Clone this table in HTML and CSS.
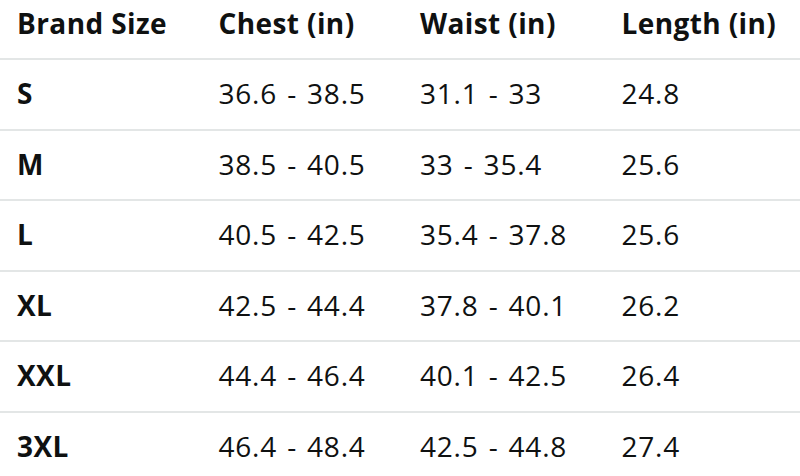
FILE: index.html
```html
<!DOCTYPE html>
<html lang="en">
<head>
<meta charset="utf-8">
<title>Size Chart</title>
<link rel="stylesheet" href="styles.css">
</head>
<body>
<table class="size-table">
  <thead>
    <tr>
      <th>Brand Size</th>
      <th>Chest (in)</th>
      <th>Waist (in)</th>
      <th>Length (in)</th>
    </tr>
  </thead>
  <tbody>
    <tr><th>S</th><td>36.6 - 38.5</td><td>31.1 - 33</td><td>24.8</td></tr>
    <tr><th>M</th><td>38.5 - 40.5</td><td>33 - 35.4</td><td>25.6</td></tr>
    <tr><th>L</th><td>40.5 - 42.5</td><td>35.4 - 37.8</td><td>25.6</td></tr>
    <tr><th>XL</th><td>42.5 - 44.4</td><td>37.8 - 40.1</td><td>26.2</td></tr>
    <tr><th>XXL</th><td>44.4 - 46.4</td><td>40.1 - 42.5</td><td>26.4</td></tr>
    <tr><th>3XL</th><td>46.4 - 48.4</td><td>42.5 - 44.8</td><td>27.4</td></tr>
  </tbody>
</table>
</body>
</html>
```
FILE: styles.css
```css
html, body {
  margin: 0;
  padding: 0;
  background: #ffffff;
  overflow: hidden;
}

body {
  width: 800px;
  height: 476px;
  font-family: "Open Sans", "Noto Sans", sans-serif;
  color: #0f1111;
}

.size-table {
  border-collapse: collapse;
  table-layout: fixed;
  width: 806px;
  font-size: 28px;
  line-height: 38px;
}

.size-table th,
.size-table td {
  width: 184.5px;
  text-align: left;
  white-space: nowrap;
  padding: 14px 0 16.6px 17px;
  border-bottom: 2px solid #e3e6e6;
}

.size-table th {
  font-weight: 700;
  letter-spacing: 0.4px;
}

.size-table td {
  font-weight: 500;
  letter-spacing: 0.8px;
  word-spacing: 2px;
}

.size-table thead th {
  padding-top: 4px;
  padding-bottom: 16px;
}

.size-table tbody tr:last-child th,
.size-table tbody tr:last-child td {
  border-bottom: none;
}
```
